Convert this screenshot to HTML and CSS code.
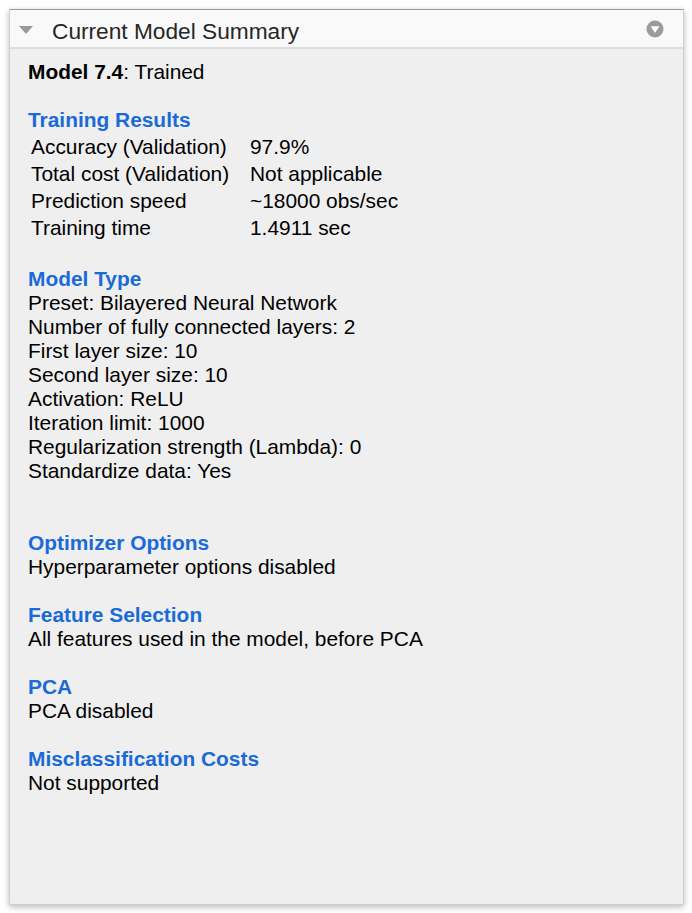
FILE: index.html
```html
<!DOCTYPE html>
<html>
<head>
<meta charset="utf-8">
<link rel="stylesheet" href="styles.css">
</head>
<body>
<div class="panel">
  <div class="panel-header">
    <span class="collapse-arrow"></span>
    <span class="panel-title">Current Model Summary</span>
    <svg class="menu-icon" width="18" height="18" viewBox="0 0 18 18">
      <circle cx="9" cy="9" r="8.5" fill="#9b9b9b"/>
      <path d="M4.6 6.3 H13.4 L9 13 Z" fill="#ffffff"/>
    </svg>
  </div>
  <div class="panel-body">
    <div class="line"><b>Model 7.4</b>: Trained</div>

    <div class="heading first">Training Results</div>
    <div class="results">
      <div class="label">Accuracy (Validation)</div><div class="value">97.9%</div>
      <div class="label">Total cost (Validation)</div><div class="value">Not applicable</div>
      <div class="label">Prediction speed</div><div class="value">~18000 obs/sec</div>
      <div class="label">Training time</div><div class="value">1.4911 sec</div>
    </div>

    <div class="heading after-table">Model Type</div>
    <div class="line">Preset: Bilayered Neural Network</div>
    <div class="line">Number of fully connected layers: 2</div>
    <div class="line">First layer size: 10</div>
    <div class="line">Second layer size: 10</div>
    <div class="line">Activation: ReLU</div>
    <div class="line">Iteration limit: 1000</div>
    <div class="line">Regularization strength (Lambda): 0</div>
    <div class="line">Standardize data: Yes</div>

    <div class="heading wide">Optimizer Options</div>
    <div class="line">Hyperparameter options disabled</div>

    <div class="heading">Feature Selection</div>
    <div class="line">All features used in the model, before PCA</div>

    <div class="heading">PCA</div>
    <div class="line">PCA disabled</div>

    <div class="heading">Misclassification Costs</div>
    <div class="line">Not supported</div>
  </div>
</div>
</body>
</html>
```

FILE: styles.css
```css
html, body {
  margin: 0;
  padding: 0;
  background: #ffffff;
}

body {
  height: 913px;
  box-sizing: border-box;
  padding: 9px 8px 8px 9px;
  font-family: Arial, "Liberation Sans", sans-serif;
}

.panel {
  height: 896px;
  box-sizing: border-box;
  display: flex;
  flex-direction: column;
  background: #efefef;
  border: 1px solid #cfcfcf;
  border-top: 1px solid #9a9a9a;
  box-shadow: 0 2px 6px rgba(0, 0, 0, 0.28);
}

.panel-header {
  height: 39px;
  box-sizing: border-box;
  display: flex;
  align-items: center;
  background: #f9f9f9;
  border-bottom: 2px solid #dedede;
  padding: 0 19px 0 9px;
}

.collapse-arrow {
  width: 0;
  height: 0;
  border-left: 7px solid transparent;
  border-right: 7px solid transparent;
  border-top: 8px solid #999999;
  margin-right: 19px;
  margin-top: 3px;
}

.panel-title {
  flex: 1;
  font-size: 22.7px;
  color: #262626;
  margin-top: 5px;
}

.menu-icon {
  display: block;
  margin-top: 1px;
}

.panel-body {
  flex: 1;
  padding: 11px 18px 0 18px;
  font-size: 20.9px;
  line-height: 24px;
  color: #000000;
}

.line {
  white-space: nowrap;
}

.heading {
  font-weight: bold;
  color: #1a6ad7;
  margin-top: 24px;
}

.heading.after-table {
  margin-top: 26px;
}

.heading.wide {
  margin-top: 48px;
}

.results {
  display: grid;
  grid-template-columns: 219px auto;
  grid-auto-rows: 27px;
  align-items: center;
  margin-top: 1px;
  padding-left: 3px;
}
```
